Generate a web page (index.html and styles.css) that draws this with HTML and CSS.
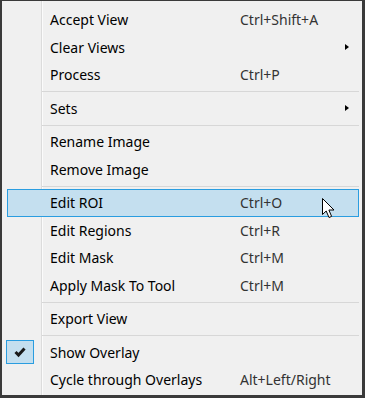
FILE: index.html
```html
<!DOCTYPE html>
<html>
<head>
<meta charset="utf-8">
<link rel="stylesheet" href="styles.css">
</head>
<body>
<div class="menu">
  <div class="item"><span class="gut"></span><span class="label">Accept View</span><span class="key">Ctrl+Shift+A</span><span class="sub"></span></div>
  <div class="item"><span class="gut"></span><span class="label">Clear Views</span><span class="key"></span><span class="sub"><i class="arrow"></i></span></div>
  <div class="item"><span class="gut"></span><span class="label">Process</span><span class="key">Ctrl+P</span><span class="sub"></span></div>
  <div class="sep"></div>
  <div class="item"><span class="gut"></span><span class="label">Sets</span><span class="key"></span><span class="sub"><i class="arrow"></i></span></div>
  <div class="sep"></div>
  <div class="item"><span class="gut"></span><span class="label">Rename Image</span><span class="key"></span><span class="sub"></span></div>
  <div class="item"><span class="gut"></span><span class="label">Remove Image</span><span class="key"></span><span class="sub"></span></div>
  <div class="sep"></div>
  <div class="item hot"><span class="gut"></span><span class="label">Edit ROI</span><span class="key">Ctrl+O</span><span class="sub"></span></div>
  <div class="item"><span class="gut"></span><span class="label">Edit Regions</span><span class="key">Ctrl+R</span><span class="sub"></span></div>
  <div class="item"><span class="gut"></span><span class="label">Edit Mask</span><span class="key">Ctrl+M</span><span class="sub"></span></div>
  <div class="item"><span class="gut"></span><span class="label">Apply Mask To Tool</span><span class="key">Ctrl+M</span><span class="sub"></span></div>
  <div class="sep"></div>
  <div class="item"><span class="gut"></span><span class="label">Export View</span><span class="key"></span><span class="sub"></span></div>
  <div class="sep"></div>
  <div class="item"><span class="gut"><span class="check"><svg width="14" height="12" viewBox="0 0 14 12"><path d="M2.5 6 L5.5 9 L11.5 2.5" fill="none" stroke="#1a1a1a" stroke-width="3"/></svg></span></span><span class="label">Show Overlay</span><span class="key"></span><span class="sub"></span></div>
  <div class="item"><span class="gut"></span><span class="label">Cycle through Overlays</span><span class="key">Alt+Left/Right</span><span class="sub"></span></div>
  <svg class="cursor" width="14" height="21" viewBox="0 0 14 21"><path d="M0.5 0.5 L0.5 16.5 L4.2 13 L7 19.5 L9.6 18.4 L6.9 12 L12 12 Z" fill="#fff" stroke="#000" stroke-width="1" stroke-linejoin="miter"/></svg>
</div>
</body>
</html>
```
FILE: styles.css
```css
html, body { margin: 0; padding: 0; }
body { width: 365px; height: 398px; overflow: hidden; }
.menu {
  position: relative;
  box-sizing: border-box;
  width: 365px;
  height: 398px;
  border-style: solid;
  border-color: #3a3a3a;
  border-width: 1px 3px 3px 2px;
  padding-top: 5px;
  background:
    linear-gradient(to right, transparent 39px, #dcdcdc 39px, #dcdcdc 40px, #fbfbfb 40px, #fbfbfb 41px, transparent 41px),
    #f0f0f0;
  font-family: "Noto Sans", "Open Sans", sans-serif;
  font-size: 14px;
  color: #000;
  display: flex;
  flex-direction: column;
}
.item {
  box-sizing: border-box;
  height: 27.5px;
  margin: 0 3px 0 5px;
  display: grid;
  grid-template-columns: 42px 190px 1fr 22px;
  align-items: center;
  border: 1px solid transparent;
}
.item.hot {
  background: #c4dfef;
  border-color: #2a9de0;
}
.gut { display: flex; align-items: center; }
.label { white-space: nowrap; }
.key { color: #333; white-space: nowrap; }
.sub { display: flex; align-items: center; }
.arrow {
  display: block;
  margin-left: 9px;
  width: 0; height: 0;
  border-left: 4px solid #000;
  border-top: 3.5px solid transparent;
  border-bottom: 3.5px solid transparent;
}
.sep {
  height: 6px;
  display: flex;
  align-items: center;
  margin-left: 40px;
  margin-right: 3px;
}
.sep::after {
  content: "";
  display: block;
  flex: 1;
  height: 1px;
  background: #d7d7d7;
}
.check {
  box-sizing: border-box;
  width: 28px;
  height: 24px;
  margin-left: -2px;
  background: #c4dfef;
  border: 1px solid #2a9de0;
  display: flex;
  align-items: center;
  justify-content: center;
}
.cursor {
  position: absolute;
  left: 320px;
  top: 197px;
}
```
